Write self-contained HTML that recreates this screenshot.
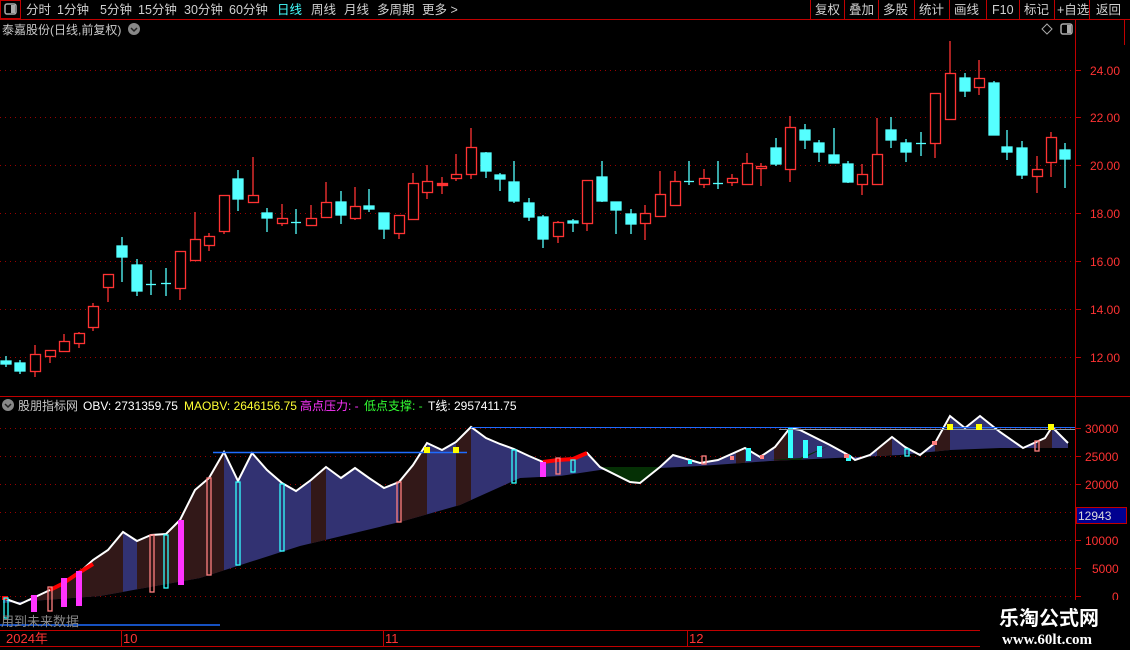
<!DOCTYPE html>
<html><head><meta charset="utf-8"><style>
html,body{margin:0;padding:0;background:#000;width:1130px;height:650px;overflow:hidden;font-family:"Liberation Sans","Noto Sans CJK SC",sans-serif;}
svg{position:absolute;left:0;top:0}
</style></head><body>
<svg width="1130" height="650" viewBox="0 0 1130 650" xmlns="http://www.w3.org/2000/svg" font-family="Liberation Sans, Noto Sans CJK SC, sans-serif">
<rect x="0.5" y="0.5" width="20" height="18" fill="none" stroke="#c00000"/>
<rect x="5" y="4" width="11" height="10" rx="2" fill="none" stroke="#aaa" stroke-width="1.5"/><rect x="11" y="5" width="4" height="8" fill="#aaa"/>
<line x1="0" y1="19.5" x2="1130" y2="19.5" stroke="#c00000"/>
<g font-size="12.5" fill="#d0d0d0">
<text x="26" y="14">分时</text><text x="57" y="14">1分钟</text><text x="100" y="14">5分钟</text><text x="138" y="14">15分钟</text><text x="184" y="14">30分钟</text><text x="229" y="14">60分钟</text>
<text x="277" y="14" fill="#4ff">日线</text><text x="311" y="14">周线</text><text x="344" y="14">月线</text><text x="377" y="14">多周期</text><text x="422" y="14">更多 &gt;</text>
<text x="815" y="14">复权</text><text x="849" y="14">叠加</text><text x="883" y="14">多股</text><text x="919" y="14">统计</text><text x="954" y="14">画线</text><text x="992" y="14">F10</text><text x="1024" y="14">标记</text><text x="1057" y="14">+自选</text><text x="1096" y="14">返回</text>
</g>
<g stroke="#c00000"><line x1="810.5" y1="0" x2="810.5" y2="19"/><line x1="844.5" y1="0" x2="844.5" y2="19"/><line x1="878.5" y1="0" x2="878.5" y2="19"/><line x1="914.5" y1="0" x2="914.5" y2="19"/><line x1="949.5" y1="0" x2="949.5" y2="19"/><line x1="986.5" y1="0" x2="986.5" y2="19"/><line x1="1019.5" y1="0" x2="1019.5" y2="19"/><line x1="1054.5" y1="0" x2="1054.5" y2="19"/><line x1="1089.5" y1="0" x2="1089.5" y2="19"/></g>
<text x="2" y="34" font-size="12" fill="#c8c8c8">泰嘉股份(日线,前复权)</text>
<circle cx="134" cy="29" r="6" fill="#888"/><path d="M131 28 L134 31 L137 28" stroke="#222" stroke-width="1.5" fill="none"/>
<path d="M1047 24 L1052 29 L1047 34 L1042 29 Z" fill="none" stroke="#aaa"/>
<rect x="1061" y="24" width="11" height="10" rx="2" fill="none" stroke="#aaa" stroke-width="1.5"/><rect x="1067" y="25" width="4" height="8" fill="#aaa"/>
<g stroke="#c00000"><line x1="1075.5" y1="20" x2="1075.5" y2="628"/><line x1="1124.5" y1="20" x2="1124.5" y2="45"/><line x1="0" y1="396.5" x2="1130" y2="396.5"/><line x1="0" y1="630.5" x2="980" y2="630.5"/><line x1="0" y1="646.5" x2="980" y2="646.5"/>
<line x1="121.5" y1="630" x2="121.5" y2="646"/><line x1="383.5" y1="630" x2="383.5" y2="646"/><line x1="687.5" y1="630" x2="687.5" y2="646"/></g>
<g stroke="#900" stroke-dasharray="1 4">
<line x1="0" y1="70.5" x2="1075" y2="70.5"/><line x1="0" y1="117.5" x2="1075" y2="117.5"/><line x1="0" y1="165.5" x2="1075" y2="165.5"/><line x1="0" y1="213.5" x2="1075" y2="213.5"/><line x1="0" y1="261.5" x2="1075" y2="261.5"/><line x1="0" y1="309.5" x2="1075" y2="309.5"/><line x1="0" y1="357.5" x2="1075" y2="357.5"/>
<line x1="0" y1="428.5" x2="1075" y2="428.5"/><line x1="0" y1="456.5" x2="1075" y2="456.5"/><line x1="0" y1="484.5" x2="1075" y2="484.5"/><line x1="0" y1="512.5" x2="1075" y2="512.5"/><line x1="0" y1="540.5" x2="1075" y2="540.5"/><line x1="0" y1="568.5" x2="1075" y2="568.5"/><line x1="0" y1="596.5" x2="1075" y2="596.5"/>
</g>
<g stroke="#c00000"><line x1="1075" y1="70.5" x2="1081" y2="70.5"/><line x1="1075" y1="117.5" x2="1081" y2="117.5"/><line x1="1075" y1="165.5" x2="1081" y2="165.5"/><line x1="1075" y1="213.5" x2="1081" y2="213.5"/><line x1="1075" y1="261.5" x2="1081" y2="261.5"/><line x1="1075" y1="309.5" x2="1081" y2="309.5"/><line x1="1075" y1="357.5" x2="1081" y2="357.5"/>
<line x1="1075" y1="428.5" x2="1081" y2="428.5"/><line x1="1075" y1="456.5" x2="1081" y2="456.5"/><line x1="1075" y1="484.5" x2="1081" y2="484.5"/><line x1="1075" y1="540.5" x2="1081" y2="540.5"/><line x1="1075" y1="568.5" x2="1081" y2="568.5"/><line x1="1075" y1="596.5" x2="1081" y2="596.5"/></g>
<g font-size="12" fill="#ff3333">
<text x="1090" y="75">24.00</text><text x="1090" y="122">22.00</text><text x="1090" y="170">20.00</text><text x="1090" y="218">18.00</text><text x="1090" y="266">16.00</text><text x="1090" y="314">14.00</text><text x="1090" y="362">12.00</text>
<text x="1085" y="433">30000</text><text x="1085" y="461">25000</text><text x="1085" y="489">20000</text><text x="1085" y="545">10000</text><text x="1092" y="573">5000</text><text x="1112" y="601">0</text>
</g>
<rect x="1076.5" y="507.5" width="50" height="16" fill="#000090" stroke="#c00000"/>
<text x="1078" y="520" font-size="12" fill="#ddd">12943</text>
<g stroke-width="1.3">
<g stroke="#55ffff" fill="#55ffff">
<line x1="6" y1="356" x2="6" y2="367"/><rect x="1" y="361" width="10" height="3"/>
<line x1="20" y1="360" x2="20" y2="374"/><rect x="15" y="363" width="10" height="8"/>
<line x1="122" y1="237" x2="122" y2="282"/><rect x="117" y="246" width="10" height="11"/>
<line x1="137" y1="259" x2="137" y2="296"/><rect x="132" y="265" width="10" height="26"/>
<line x1="151" y1="270" x2="151" y2="295"/><line x1="146" y1="284.5" x2="156" y2="284.5"/>
<line x1="166" y1="268" x2="166" y2="296"/><line x1="161" y1="283.5" x2="171" y2="283.5"/>
<line x1="238" y1="170" x2="238" y2="211"/><rect x="233" y="179" width="10" height="20"/>
<line x1="267" y1="208" x2="267" y2="232"/><rect x="262" y="213" width="10" height="5"/>
<line x1="296" y1="209" x2="296" y2="234"/><line x1="291" y1="222.5" x2="301" y2="222.5"/>
<line x1="341" y1="191" x2="341" y2="224"/><rect x="336" y="202" width="10" height="13"/>
<line x1="369" y1="189" x2="369" y2="212"/><rect x="364" y="206" width="10" height="3"/>
<line x1="384" y1="213" x2="384" y2="239"/><rect x="379" y="213" width="10" height="16"/>
<line x1="486" y1="152" x2="486" y2="178"/><rect x="481" y="153" width="10" height="18"/>
<line x1="500" y1="173" x2="500" y2="191"/><rect x="495" y="175" width="10" height="4"/>
<line x1="514" y1="161" x2="514" y2="203"/><rect x="509" y="182" width="10" height="19"/>
<line x1="529" y1="198" x2="529" y2="221"/><rect x="524" y="203" width="10" height="14"/>
<line x1="543" y1="215" x2="543" y2="248"/><rect x="538" y="217" width="10" height="22"/>
<line x1="573" y1="219" x2="573" y2="232"/><rect x="568" y="221" width="10" height="2"/>
<line x1="602" y1="161" x2="602" y2="202"/><rect x="597" y="177" width="10" height="24"/>
<line x1="616" y1="202" x2="616" y2="234"/><rect x="611" y="202" width="10" height="8"/>
<line x1="631" y1="209" x2="631" y2="234"/><rect x="626" y="214" width="10" height="10"/>
<line x1="689" y1="161" x2="689" y2="185"/><line x1="684" y1="181.5" x2="694" y2="181.5"/>
<line x1="718" y1="161" x2="718" y2="189"/><line x1="713" y1="183.5" x2="723" y2="183.5"/>
<line x1="776" y1="138" x2="776" y2="166"/><rect x="771" y="148" width="10" height="16"/>
<line x1="805" y1="124" x2="805" y2="149"/><rect x="800" y="130" width="10" height="10"/>
<line x1="819" y1="140" x2="819" y2="162"/><rect x="814" y="143" width="10" height="9"/>
<line x1="834" y1="128" x2="834" y2="163"/><rect x="829" y="155" width="10" height="8"/>
<line x1="848" y1="161" x2="848" y2="183"/><rect x="843" y="164" width="10" height="18"/>
<line x1="891" y1="117" x2="891" y2="148"/><rect x="886" y="130" width="10" height="10"/>
<line x1="906" y1="139" x2="906" y2="162"/><rect x="901" y="143" width="10" height="9"/>
<line x1="921" y1="132" x2="921" y2="156"/><line x1="916" y1="143.5" x2="926" y2="143.5"/>
<line x1="965" y1="73" x2="965" y2="97"/><rect x="960" y="78" width="10" height="13"/>
<line x1="994" y1="81" x2="994" y2="135"/><rect x="989" y="83" width="10" height="52"/>
<line x1="1007" y1="130" x2="1007" y2="160"/><rect x="1002" y="147" width="10" height="5"/>
<line x1="1022" y1="141" x2="1022" y2="179"/><rect x="1017" y="148" width="10" height="27"/>
<line x1="1065" y1="143" x2="1065" y2="188"/><rect x="1060" y="150" width="10" height="9"/>
</g>
<g stroke="#ff3333" fill="#000">
<line x1="35" y1="345" x2="35" y2="377"/><rect x="30.5" y="354.5" width="10" height="17"/>
<line x1="50" y1="350" x2="50" y2="363"/><rect x="45.5" y="350.5" width="10" height="6"/>
<line x1="64" y1="334" x2="64" y2="351"/><rect x="59.5" y="341.5" width="10" height="10"/>
<line x1="79" y1="332" x2="79" y2="348"/><rect x="74.5" y="333.5" width="10" height="10"/>
<line x1="93" y1="303" x2="93" y2="331"/><rect x="88.5" y="306.5" width="10" height="21"/>
<line x1="108" y1="274" x2="108" y2="302"/><rect x="103.5" y="274.5" width="10" height="13"/>
<line x1="180" y1="251" x2="180" y2="300"/><rect x="175.5" y="251.5" width="10" height="37"/>
<line x1="195" y1="212" x2="195" y2="261"/><rect x="190.5" y="239.5" width="10" height="21"/>
<line x1="209" y1="233" x2="209" y2="251"/><rect x="204.5" y="236.5" width="10" height="9"/>
<line x1="224" y1="195" x2="224" y2="234"/><rect x="219.5" y="195.5" width="10" height="36"/>
<line x1="253" y1="157" x2="253" y2="203"/><rect x="248.5" y="195.5" width="10" height="7"/>
<line x1="282" y1="204" x2="282" y2="226"/><rect x="277.5" y="218.5" width="10" height="5"/>
<line x1="311" y1="205" x2="311" y2="225"/><rect x="306.5" y="218.5" width="10" height="7"/>
<line x1="326" y1="182" x2="326" y2="218"/><rect x="321.5" y="202.5" width="10" height="15"/>
<line x1="355" y1="187" x2="355" y2="220"/><rect x="350.5" y="206.5" width="10" height="12"/>
<line x1="399" y1="215" x2="399" y2="239"/><rect x="394.5" y="215.5" width="10" height="18"/>
<line x1="413" y1="173" x2="413" y2="220"/><rect x="408.5" y="183.5" width="10" height="36"/>
<line x1="427" y1="165" x2="427" y2="199"/><rect x="422.5" y="181.5" width="10" height="11"/>
<line x1="442" y1="177" x2="442" y2="194"/><rect x="437.5" y="183.5" width="10" height="2" fill="#ff3333"/>
<line x1="456" y1="154" x2="456" y2="181"/><rect x="451.5" y="174.5" width="10" height="4"/>
<line x1="471" y1="128" x2="471" y2="179"/><rect x="466.5" y="147.5" width="10" height="27"/>
<line x1="558" y1="221" x2="558" y2="243"/><rect x="553.5" y="222.5" width="10" height="14"/>
<line x1="587" y1="180" x2="587" y2="231"/><rect x="582.5" y="180.5" width="10" height="43"/>
<line x1="645" y1="205" x2="645" y2="240"/><rect x="640.5" y="213.5" width="10" height="10"/>
<line x1="660" y1="171" x2="660" y2="216"/><rect x="655.5" y="194.5" width="10" height="22"/>
<line x1="675" y1="171" x2="675" y2="206"/><rect x="670.5" y="181.5" width="10" height="24"/>
<line x1="704" y1="169" x2="704" y2="188"/><rect x="699.5" y="178.5" width="10" height="6"/>
<line x1="732" y1="174" x2="732" y2="186"/><rect x="727.5" y="178.5" width="10" height="4"/>
<line x1="747" y1="153" x2="747" y2="184"/><rect x="742.5" y="163.5" width="10" height="21"/>
<line x1="761" y1="163" x2="761" y2="186"/><rect x="756.5" y="166.5" width="10" height="2"/>
<line x1="790" y1="116" x2="790" y2="182"/><rect x="785.5" y="127.5" width="10" height="42"/>
<line x1="862" y1="164" x2="862" y2="195"/><rect x="857.5" y="174.5" width="10" height="10"/>
<line x1="877" y1="118" x2="877" y2="182"/><rect x="872.5" y="154.5" width="10" height="30"/>
<line x1="935" y1="93" x2="935" y2="158"/><rect x="930.5" y="93.5" width="10" height="50"/>
<line x1="950" y1="41" x2="950" y2="120"/><rect x="945.5" y="73.5" width="10" height="46"/>
<line x1="979" y1="60" x2="979" y2="95"/><rect x="974.5" y="78.5" width="10" height="9"/>
<line x1="1037" y1="156" x2="1037" y2="193"/><rect x="1032.5" y="169.5" width="10" height="7"/>
<line x1="1051" y1="132" x2="1051" y2="177"/><rect x="1046.5" y="137.5" width="10" height="25"/>
</g>
</g>
<circle cx="8" cy="405" r="6" fill="#888"/><path d="M5 404 L8 407 L11 404" stroke="#222" stroke-width="1.5" fill="none"/>
<g font-size="12">
<text x="18" y="410" fill="#c8c8c8">股朋指标网</text>
<text x="83" y="410" fill="#fff">OBV: 2731359.75</text>
<text x="184" y="410" fill="#ffff33">MAOBV: 2646156.75</text>
<text x="300" y="410" fill="#ff33ff">高点压力: -</text>
<text x="364" y="410" fill="#33ff33">低点支撑: -</text>
<text x="428" y="410" fill="#fff">T线: 2957411.75</text>
</g>
<defs>
<clipPath id="area"><polygon points="3,598 20,604 33,598 50,590 62,584 80,572 93,560 108,550 123,532 137,541 151,535 166,534 180,520 195,490 209,478 224,452 238,481 252,453 267,470 282,483 296,491 311,480 326,467 341,478 355,468 369,478 384,488 399,482 413,465 427,443 442,450 456,442 471,427 486,438 500,444 514,449 529,456 543,462 558,460 573,459 587,453 600,467 630,482 640,483 660,467 673,455 690,460 700,463 718,460 745,448 760,457 775,447 790,428 800,430 830,445 850,456 855,460 870,455 892,437 905,447 920,455 935,443 950,416 965,428 980,416 1000,432 1023,448 1045,438 1052,427 1068,443 1068,448 1000,448 950,450 900,455 770,461 700,466 660,468 600,470 560,476 520,478 460,505 400,522 300,546 200,578 100,596 3,603"/></clipPath>
</defs>
<g clip-path="url(#area)">
<rect x="0" y="410" width="1075" height="200" fill="#323272"/>
<g fill="#321818">
<rect x="33" y="410" width="90" height="200"/><rect x="137" y="410" width="87" height="200"/><rect x="311" y="410" width="15" height="200"/><rect x="399" y="410" width="28" height="200"/><rect x="456" y="410" width="15" height="200"/><rect x="736" y="410" width="9" height="200"/><rect x="774" y="410" width="16" height="200"/><rect x="877" y="410" width="15" height="200"/><rect x="935" y="410" width="15" height="200"/><rect x="1037" y="410" width="15" height="200"/>
</g>
</g>
<polygon points="600,467 630,482 640,483 660,467 600,467" fill="#053005"/>
<polygon points="770,460 800,460 830,445 800,458" fill="#053005"/>
<polyline fill="none" stroke="#fff" stroke-width="2" points="3,598 20,604 33,598 50,590 62,584 80,572 93,560 108,550 123,532 137,541 151,535 166,534 180,520 195,490 209,478 224,452 238,481 252,453 267,470 282,483 296,491 311,480 326,467 341,478 355,468 369,478 384,488 399,482 413,465 427,443 442,450 456,442 471,427 486,438 500,444 514,449 529,456 543,462 558,460 573,459 587,453 600,467 630,482 640,483 660,467 673,455 690,460 700,463 718,460 745,448 760,457 775,447 790,428 800,430 830,445 850,456 855,460 870,455 892,437 905,447 920,455 935,443 950,416 965,428 980,416 1000,432 1023,448 1045,438 1052,427 1068,443"/>
<g stroke="#ff0000" stroke-width="4" fill="none"><polyline points="50,590 62,584 80,572 93,564"/><polyline points="543,462 558,460 573,459 587,453"/><line x1="2" y1="598" x2="8" y2="598"/></g>
<g fill="#ff33ff"><rect x="31" y="595" width="6" height="17"/><rect x="61" y="578" width="6" height="29"/><rect x="76" y="571" width="6" height="35"/><rect x="178" y="520" width="6" height="65"/><rect x="540" y="462" width="6" height="15"/></g>
<g fill="none" stroke="#ff8080" stroke-width="1.3"><rect x="48" y="587" width="4" height="24"/><rect x="150" y="535" width="4" height="57"/><rect x="207" y="478" width="4" height="97"/><rect x="397" y="482" width="4" height="40"/><rect x="556" y="458" width="4" height="16"/><rect x="702" y="456" width="4" height="8"/><rect x="1035" y="441" width="4" height="10"/></g>
<g fill="none" stroke="#33ffff" stroke-width="1.3"><rect x="4" y="598" width="4" height="20"/><rect x="164" y="535" width="4" height="53"/><rect x="236" y="482" width="4" height="83"/><rect x="280" y="484" width="4" height="67"/><rect x="512" y="450" width="4" height="33"/><rect x="571" y="460" width="4" height="12"/><rect x="905" y="449" width="4" height="7"/></g>
<g fill="#33ffff"><rect x="746" y="448" width="5" height="13"/><rect x="788" y="428" width="5" height="30"/><rect x="803" y="440" width="5" height="18"/><rect x="817" y="446" width="5" height="11"/><rect x="846" y="455" width="5" height="6"/><rect x="688" y="460" width="4" height="4"/></g>
<g fill="#ff8080"><rect x="730" y="456" width="4" height="4"/><rect x="760" y="455" width="4" height="4"/><rect x="844" y="454" width="5" height="4"/><rect x="932" y="441" width="5" height="4"/></g>
<line x1="213" y1="452.5" x2="467" y2="452.5" stroke="#1e6cff" stroke-width="1.5"/>
<line x1="471" y1="427.5" x2="1075" y2="427.5" stroke="#1e6cff" stroke-width="1"/>
<line x1="779" y1="429.5" x2="1075" y2="429.5" stroke="#8899aa" stroke-width="1"/>
<g fill="#ffff00"><rect x="424" y="447" width="6" height="6"/><rect x="453" y="447" width="6" height="6"/><rect x="947" y="424" width="6" height="6"/><rect x="976" y="424" width="6" height="6"/><rect x="1048" y="424" width="6" height="6"/></g>
<line x1="0" y1="625" x2="220" y2="625" stroke="#1e6cff" stroke-width="1.5"/>
<text x="1" y="626" font-size="13" fill="#888">用到未来数据</text>
<g font-size="13" fill="#ff3333"><text x="6" y="643">2024年</text><text x="123" y="643">10</text><text x="385" y="643">11</text><text x="689" y="643">12</text></g>
<rect x="980" y="600" width="150" height="50" fill="#000"/>
<text x="999" y="625" font-size="20" font-weight="bold" fill="#fff" font-family="Noto Sans CJK SC, sans-serif">乐淘公式网</text>
<text x="1002" y="644" font-size="15" font-weight="bold" fill="#fff" font-family="Liberation Serif, serif">www.60lt.com</text>
</svg>
</body></html>
